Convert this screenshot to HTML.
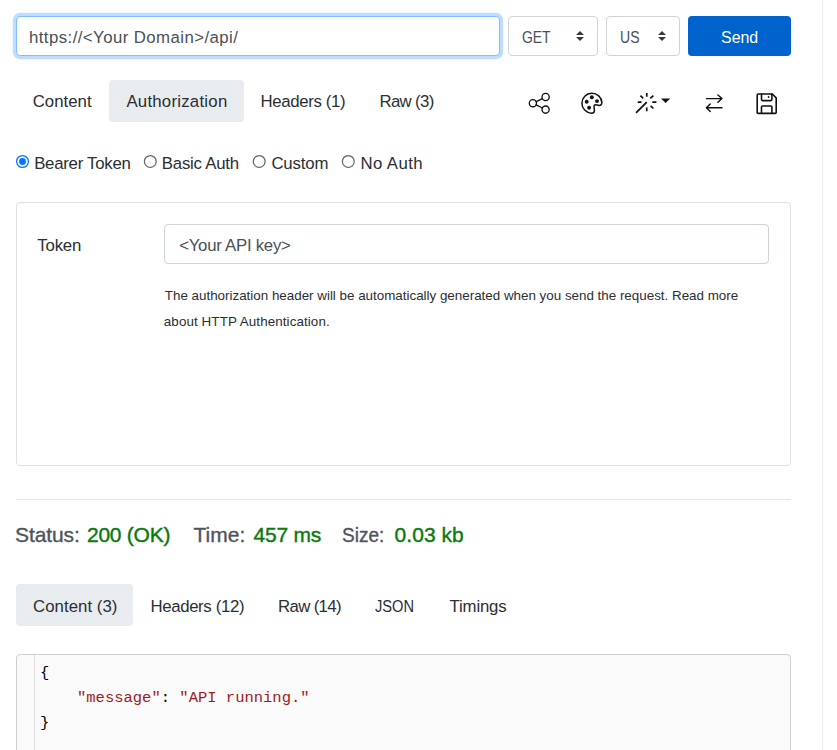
<!DOCTYPE html>
<html>
<head>
<meta charset="utf-8">
<style>
html,body{margin:0;padding:0;background:#fff;width:837px;height:750px;overflow:hidden;position:relative;}
body{font-family:"Liberation Sans",sans-serif;color:#2a2e33;}
.a{position:absolute;white-space:pre;line-height:1;}
.box{position:absolute;box-sizing:border-box;}
.t{font-size:16.8px;}
</style>
</head>
<body>
<!-- right scrollbar edge -->
<div class="box" style="left:822px;top:0;width:1px;height:750px;background:#efefef;"></div>

<!-- URL input with focus ring -->
<div class="box" style="left:16px;top:16px;width:484px;height:40px;border:1px solid #80bdff;border-radius:4px;box-shadow:0 0 0 3.2px rgba(0,123,255,.25);background:#fff;"></div>

<!-- GET select -->
<div class="box" style="left:508px;top:16px;width:90px;height:40px;border:1px solid #ced4da;border-radius:4px;background:#fff;"></div>
<svg class="box" style="left:576px;top:31px" width="8" height="10" viewBox="0 0 4 5"><path fill="#343a40" d="M2 0L0 2h4zm0 5L0 3h4z"/></svg>

<!-- US select -->
<div class="box" style="left:606px;top:16px;width:74px;height:40px;border:1px solid #ced4da;border-radius:4px;background:#fff;"></div>
<svg class="box" style="left:658px;top:31px" width="8" height="10" viewBox="0 0 4 5"><path fill="#343a40" d="M2 0L0 2h4zm0 5L0 3h4z"/></svg>

<!-- Send button -->
<div class="box" style="left:688px;top:16px;width:103px;height:40px;border-radius:4px;background:#0062cc;"></div>

<!-- Request tabs -->
<div class="box" style="left:109px;top:80px;width:135px;height:42px;border-radius:4px;background:#e9ecef;"></div>

<!-- Icons -->
<svg class="box" style="left:0;top:0" width="837" height="140" viewBox="0 0 837 140" fill="none" stroke="#111" stroke-width="1.5" stroke-linecap="round" stroke-linejoin="round">
  <!-- share -->
  <g stroke-width="1.35">
  <circle cx="532.9" cy="103.2" r="3.6"/>
  <circle cx="545.6" cy="97.0" r="3.6"/>
  <circle cx="545.6" cy="109.6" r="3.6"/>
  <path d="M536.2 101.6L542.4 98.6M536.2 104.8L542.4 108"/>
  </g>
  <!-- palette -->
  <path d="M591.5 113.2a10 10 0 1 1 10.4-10.6c0 2-1.4 3.3-3.6 2.6c-1.6-.5-3.2-1-4 .1c-.9 1.2 .3 3.3 .1 5.6c-.1 1.4-1.4 2.3-2.9 2.3z"/>
  <g fill="#111" stroke="none">
    <circle cx="591.8" cy="97.3" r="1.95"/>
    <circle cx="597" cy="101.1" r="1.95"/>
    <circle cx="586.7" cy="101.8" r="1.95"/>
    <circle cx="589.1" cy="107.8" r="1.95"/>
  </g>
  <!-- magic -->
  <g stroke-width="1.7" stroke-linecap="butt">
  <path d="M646.75 93.1V96.7M646.75 107.4V111.3M637.7 102.2H641.5M652.3 102.2H656.4M640.4 95.6L643.2 98.4M650.3 98.4L653.4 95.6M650.6 105.8L653.4 108.5M636 112.9L646.75 102.2"/>
  </g>
  <path d="M661 98.4H670.2L665.6 102.9Z" fill="#111" stroke="none"/>
  <!-- arrows -->
  <path d="M706.4 98.6H722M717.9 94.9L722 98.6L717.9 102.3M706.4 107.8H722M710.2 104L706.4 107.8L710.2 111.4" stroke-width="1.4"/>
  <!-- floppy -->
  <g stroke-width="1.6">
  <path d="M758.2 94H772.3L776.2 97.9V112.4A1 1 0 0 1 775.2 113.4H758.2A1 1 0 0 1 757.2 112.4V95A1 1 0 0 1 758.2 94Z"/>
  <path d="M761.5 94v5.6a1 1 0 0 0 1 1h8.4a1 1 0 0 0 1-1v-5.6"/>
  <path d="M761.5 113.3v-6.3a1 1 0 0 1 1-1h8.4a1 1 0 0 1 1 1v6.3"/>
  </g>
  <circle cx="768.6" cy="97" r="0.9" fill="#111" stroke="none"/>
</svg>

<!-- Radios -->
<svg class="box" style="left:0;top:140px" width="400" height="40" viewBox="0 140 400 40">
  <circle cx="22.5" cy="161.5" r="5.9" fill="#fff" stroke="#0075ff" stroke-width="1.3"/>
  <circle cx="22.5" cy="161.5" r="3.4" fill="#0075ff"/>
  <circle cx="150.3" cy="161.4" r="5.9" fill="#fff" stroke="#656565" stroke-width="1.25"/>
  <circle cx="259.2" cy="161.4" r="5.9" fill="#fff" stroke="#656565" stroke-width="1.25"/>
  <circle cx="348.3" cy="161.4" r="5.9" fill="#fff" stroke="#656565" stroke-width="1.25"/>
</svg>
<!-- Card -->
<div class="box" style="left:16px;top:202px;width:775px;height:264px;border:1px solid #dfdfdf;border-radius:4px;"></div>
<div class="box" style="left:164px;top:224px;width:605px;height:40px;border:1px solid #ced4da;border-radius:4px;"></div>

<!-- hr -->
<div class="box" style="left:16px;top:499px;width:775px;height:1px;background:#e6e6e6;"></div>

<!-- Status -->

<!-- Response tabs -->
<div class="box" style="left:16px;top:584px;width:117px;height:42px;border-radius:4px;background:#e9ecef;"></div>

<!-- Code block -->
<div class="box" style="left:16px;top:654px;width:775px;height:110px;border:1px solid #cfcfcf;border-radius:4px;background:#fafafa;"></div>
<div class="box" style="left:34px;top:655px;width:1px;height:95px;background:#dddddd;"></div>
<div class="a" id="c1" style="left:40px;top:666.1px;font-family:'Liberation Mono',monospace;font-size:15.5px;color:#000;">{</div>
<div class="a" id="c2" style="left:77px;top:691.1px;font-family:'Liberation Mono',monospace;font-size:15.5px;color:#000;"><span style="color:#a0191b">"message"</span>: <span style="color:#a0191b">"API running."</span></div>
<div class="a" id="c3" style="left:40px;top:716.1px;font-family:'Liberation Mono',monospace;font-size:15.5px;color:#000;">}</div>
<div class="a" id="url" style="left:29.00px;top:30.28px;font-size:16.8px;letter-spacing:0.432px;color:#495057;">https://&lt;Your Domain&gt;/api/</div>
<div class="a" id="get" style="left:521.50px;top:30.28px;font-size:16.8px;letter-spacing:0.000px;transform:scaleX(0.8299);transform-origin:0 0;color:#495057;">GET</div>
<div class="a" id="us" style="left:620.30px;top:30.28px;font-size:16.8px;letter-spacing:0.000px;transform:scaleX(0.8360);transform-origin:0 0;color:#495057;">US</div>
<div class="a" id="send" style="left:720.50px;top:29.58px;font-size:16.8px;letter-spacing:0.000px;transform:scaleX(0.9503);transform-origin:0 0;color:#fff;">Send</div>
<div class="a" id="tab1" style="left:32.70px;top:94.18px;font-size:16.8px;letter-spacing:0.030px;">Content</div>
<div class="a" id="tab2" style="left:126.40px;top:94.18px;font-size:16.8px;letter-spacing:0.240px;">Authorization</div>
<div class="a" id="tab3" style="left:260.50px;top:94.18px;font-size:16.8px;letter-spacing:-0.360px;">Headers (1)</div>
<div class="a" id="tab4" style="left:379.40px;top:94.18px;font-size:16.8px;letter-spacing:-0.630px;">Raw (3)</div>
<div class="a" id="r1" style="left:34.20px;top:156.28px;font-size:16.8px;letter-spacing:-0.262px;">Bearer Token</div>
<div class="a" id="r2" style="left:161.80px;top:156.28px;font-size:16.8px;letter-spacing:-0.220px;">Basic Auth</div>
<div class="a" id="r3" style="left:271.40px;top:156.28px;font-size:16.8px;letter-spacing:-0.144px;">Custom</div>
<div class="a" id="r4" style="left:360.40px;top:156.28px;font-size:16.8px;letter-spacing:0.420px;">No Auth</div>
<div class="a" id="tok" style="left:37.30px;top:237.68px;font-size:16.8px;letter-spacing:-0.180px;">Token</div>
<div class="a" id="tokv" style="left:179.20px;top:237.68px;font-size:16.8px;letter-spacing:-0.263px;color:#495057;">&lt;Your API key&gt;</div>
<div class="a" id="help1" style="left:164.80px;top:289.46px;font-size:13.4px;letter-spacing:-0.006px;">The authorization header will be automatically generated when you send the request. Read more</div>
<div class="a" id="help2" style="left:163.80px;top:314.56px;font-size:13.4px;letter-spacing:0.094px;">about HTTP Authentication.</div>
<div class="a" id="st1" style="left:15.10px;top:524.42px;font-size:21px;letter-spacing:-0.120px;color:#4d545b;-webkit-text-stroke:0.35px #4d545b;">Status:</div>
<div class="a" id="st2" style="left:87.00px;top:524.42px;font-size:21px;letter-spacing:-0.257px;color:#0a7a0a;-webkit-text-stroke:0.4px #0a7a0a;">200 (OK)</div>
<div class="a" id="st3" style="left:193.50px;top:524.42px;font-size:21px;letter-spacing:0.045px;color:#4d545b;-webkit-text-stroke:0.35px #4d545b;">Time:</div>
<div class="a" id="st4" style="left:253.60px;top:524.42px;font-size:21px;letter-spacing:-0.252px;color:#0a7a0a;-webkit-text-stroke:0.4px #0a7a0a;">457 ms</div>
<div class="a" id="st5" style="left:342.40px;top:524.42px;font-size:21px;letter-spacing:0.000px;transform:scaleX(0.9053);transform-origin:0 0;color:#4d545b;-webkit-text-stroke:0.35px #4d545b;">Size:</div>
<div class="a" id="st6" style="left:394.60px;top:524.42px;font-size:21px;letter-spacing:0.030px;color:#0a7a0a;-webkit-text-stroke:0.4px #0a7a0a;">0.03 kb</div>
<div class="a" id="rt1" style="left:33.10px;top:599.18px;font-size:16.8px;letter-spacing:0.036px;">Content (3)</div>
<div class="a" id="rt2" style="left:150.40px;top:599.18px;font-size:16.8px;letter-spacing:-0.344px;">Headers (12)</div>
<div class="a" id="rt3" style="left:278.00px;top:599.18px;font-size:16.8px;letter-spacing:-0.643px;">Raw (14)</div>
<div class="a" id="rt4" style="left:375.40px;top:599.18px;font-size:16.8px;letter-spacing:0.000px;transform:scaleX(0.8728);transform-origin:0 0;">JSON</div>
<div class="a" id="rt5" style="left:449.60px;top:599.18px;font-size:16.8px;letter-spacing:-0.180px;">Timings</div>
</body>
</html>
